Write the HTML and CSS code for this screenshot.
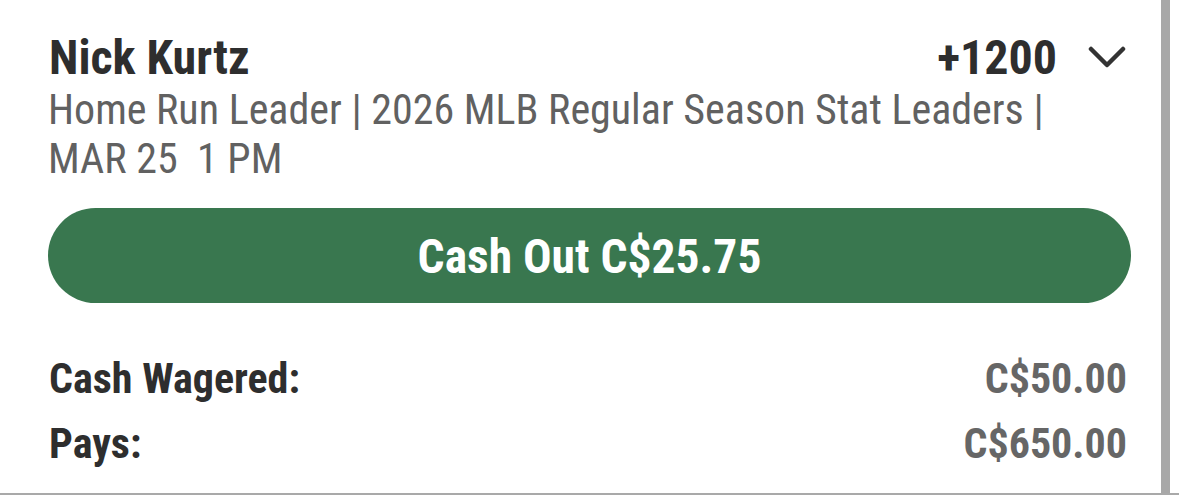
FILE: index.html
```html
<!DOCTYPE html>
<html>
<head>
    <meta charset="UTF-8">
    <meta name="viewport" content="width=device-width, initial-scale=1.0">
    <title>Bet Slip</title>
    <link rel="stylesheet" href="styles.css">
</head>
<body>
    <div class="page">
        <div class="bet-card">
            <div class="bet-header">
                <div class="bet-name">Nick Kurtz</div>
                <div class="bet-odds">
                    <span>+1200</span>
                    <svg class="chevron" width="38" height="22" viewBox="0 0 38 22">
                        <path d="M3 3 L19 19 L35 3" fill="none" stroke="#333" stroke-width="4.5" stroke-linecap="round" stroke-linejoin="round"/>
                    </svg>
                </div>
            </div>
            <div class="bet-desc">Home Run Leader | 2026 MLB Regular Season Stat Leaders |<br>MAR 25&nbsp; 1 PM</div>
            <button class="cashout-btn">Cash Out C$25.75</button>
            <dl class="bet-info">
                <dt>Cash Wagered:</dt>
                <dd>C$50.00</dd>
                <dt>Pays:</dt>
                <dd>C$650.00</dd>
            </dl>
        </div>
        <div class="scroll-bar"></div>
        <div class="scroll-gap"></div>
    </div>
</body>
</html>
```

FILE: styles.css
```css
body {
    margin: 0;
    background-color: #fff;
    font-family: Roboto, "Liberation Sans", sans-serif;
    font-stretch: condensed;
}

.page {
    display: flex;
    height: 493px;
    border-bottom: 2px solid #a9a9a9;
}

.bet-card {
    flex: 1;
    padding: 29px 30px 0 48px;
}

.scroll-bar {
    width: 9px;
    background-color: #a8a8a8;
}

.scroll-gap {
    width: 9px;
}

.bet-header {
    display: flex;
    justify-content: space-between;
    align-items: center;
    height: 56px;
    padding-left: 1px;
}

.bet-name {
    font-size: 48px;
    font-weight: bold;
    color: #2e2e2e;
}

.bet-odds {
    display: flex;
    align-items: center;
    gap: 31px;
    font-size: 48px;
    font-weight: bold;
    color: #2e2e2e;
    padding-right: 5px;
}

.bet-desc {
    font-size: 42px;
    line-height: 49px;
    color: #616161;
}

.cashout-btn {
    display: block;
    width: 100%;
    height: 95px;
    margin-top: 25px;
    border: none;
    border-radius: 48px;
    background-color: #39774f;
    color: #fff;
    font-family: inherit;
    font-stretch: inherit;
    font-size: 47.5px;
    font-weight: bold;
    padding: 2px 0 0 0;
}

/* wager rows */
.bet-info {
    display: grid;
    grid-template-columns: 1fr auto;
    margin: 43px 4px 0 1px;
    font-size: 42px;
    line-height: 65px;
    font-weight: bold;
}

.bet-info dt {
    color: #2e2e2e;
}

.bet-info dd {
    margin: 0;
    text-align: right;
    color: #666;
}
```
